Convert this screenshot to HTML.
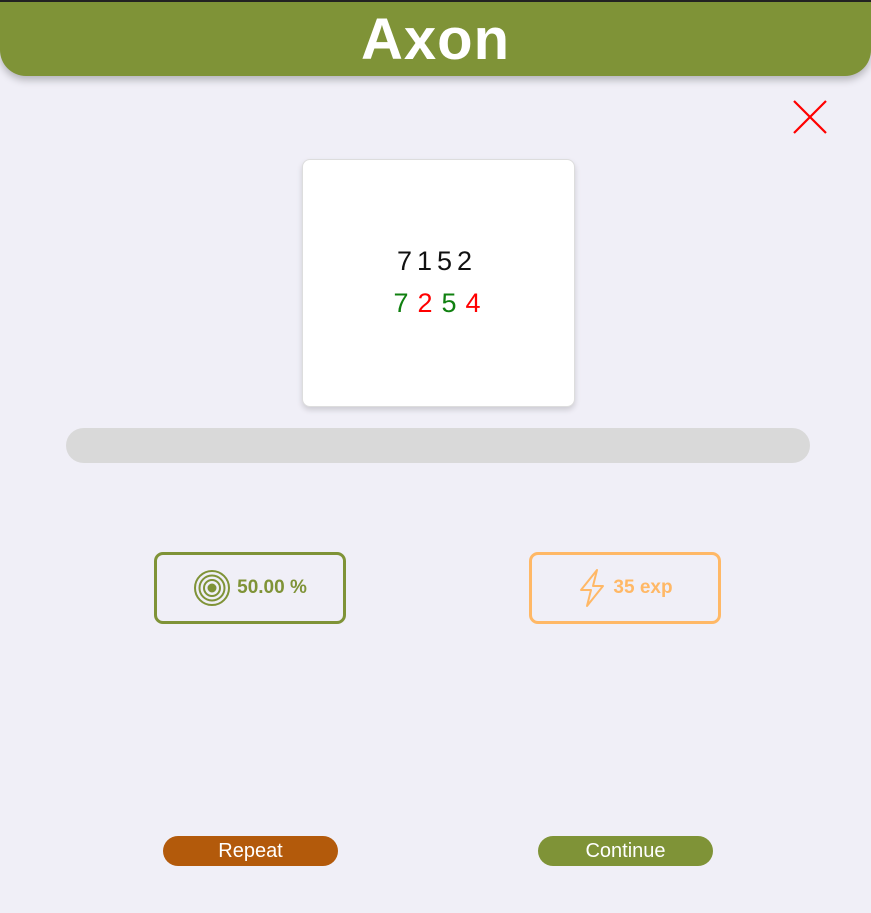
<!DOCTYPE html>
<html><head><style>
*{margin:0;padding:0;box-sizing:border-box}
body{width:871px;height:913px;background:#f0eff7;font-family:"Liberation Sans",sans-serif;position:relative;overflow:hidden}
.top{position:absolute;left:0;top:0;width:871px;height:2px;background:#222}
.hdr{position:absolute;left:0;top:1px;width:871px;height:75px;background:#7f9337;border-radius:0 0 26px 26px;box-shadow:0 4px 8px rgba(0,0,0,.25);color:#fff;font-weight:bold;font-size:58px;text-align:center;line-height:78px;letter-spacing:1px}
.card{position:absolute;left:302px;top:159px;width:273px;height:248px;background:#fff;border-radius:8px;border:1px solid #ddd;box-shadow:0 3px 6px rgba(0,0,0,.15);text-align:center}
.n{position:absolute;left:0;width:100%;font-size:27px}
.bar{position:absolute;left:66px;top:428px;width:744px;height:35px;background:#d9d9d9;border-radius:18px}
.box{position:absolute;top:552px;width:192px;height:72px;border-radius:9px;border:3px solid;display:flex;align-items:center;justify-content:center;font-weight:bold;font-size:19px;gap:6px}
.btn{position:absolute;top:836px;width:175px;height:30px;border-radius:15px;color:#fff;font-size:20px;text-align:center;line-height:31px}
</style></head><body>
<div class="hdr">Axon</div><div class="top"></div>
<svg style="position:absolute;left:792px;top:99px" width="36" height="36"><path d="M2 2L34 34M34 2L2 34" stroke="#f00" stroke-width="2.2"/></svg>
<div class="card">
<div class="n" style="top:86px;color:#111;letter-spacing:5px;padding-right:3px">7152</div>
<div class="n" style="top:128px;letter-spacing:9px;padding-left:6px"><span style="color:#108010">7</span><span style="color:#f00">2</span><span style="color:#108010">5</span><span style="color:#f00">4</span></div>
</div>
<div class="bar"></div>
<div class="box" style="left:154px;border-color:#7f9337;color:#7f9337">
<svg width="38" height="38" viewBox="0 0 38 38" fill="none" stroke="#7f9337" stroke-width="2"><circle cx="19" cy="19" r="17"/><circle cx="19" cy="19" r="12.5"/><circle cx="19" cy="19" r="8"/><circle cx="19" cy="19" r="3.5" fill="#7f9337"/></svg>50.00 %</div>
<div class="box" style="left:529px;border-color:#ffb866;color:#ffb866">
<svg width="30" height="40" viewBox="0 0 30 40" fill="none" stroke="#ffb866" stroke-width="2" stroke-linejoin="round"><path d="M20 2L4 22H14L10 38L26 18H16Z"/></svg>35 exp</div>
<div class="btn" style="left:163px;background:#b35a0b">Repeat</div>
<div class="btn" style="left:538px;background:#7f9337">Continue</div>
</body></html>
